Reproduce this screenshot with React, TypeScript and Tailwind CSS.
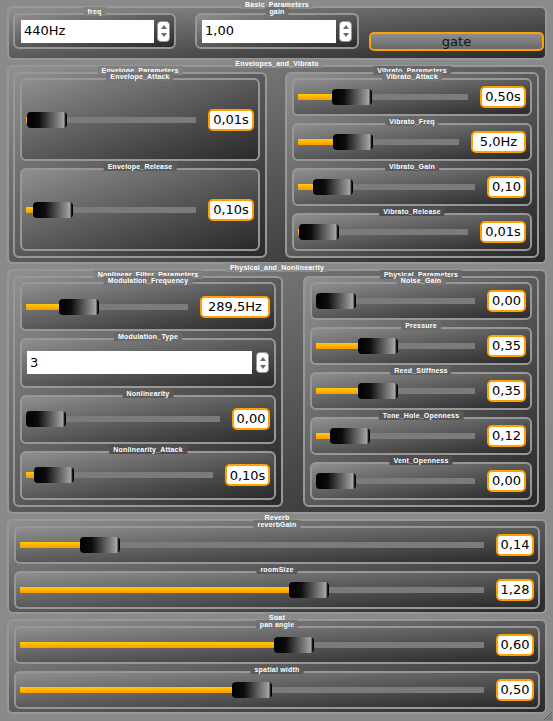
import type { ReactNode } from "react";

type SliderItem = {
  label: string;
  lb: string;
  off: number;
  val: string;
  vw: string;
};

const Label = ({ text, bg }: { text: string; bg: string }) => (
  <span
    className={`absolute left-1/2 top-[-8px] z-10 h-[9px] -translate-x-1/2 whitespace-nowrap px-[4px] font-['Liberation_Sans',Arial,sans-serif] text-[7px] font-bold leading-[9px] tracking-[0.2px] text-white ${bg}`}
  >
    {text}
  </span>
);

const Box = ({
  label,
  lb = "bg-[#8a8a8a]",
  className = "",
  children,
}: {
  label?: string;
  lb?: string;
  className?: string;
  children?: ReactNode;
}) => (
  <div
    className={`relative rounded-[6px] border-2 border-[#979797] bg-linear-to-br from-[#8f8f8f] to-[#2a2a2a] ${className}`}
  >
    {label && <Label text={label} bg={lb} />}
    {children}
  </div>
);

const Slider = ({ item, className = "" }: { item: SliderItem; className?: string }) => (
  <Box
    label={item.label}
    lb={item.lb}
    className={`flex min-h-[38px] items-center gap-[12px] pl-[4px] pr-[4px] ${className}`}
  >
    <div className="relative h-[6px] flex-1 bg-[#7b7b7b]">
      {item.off > 0 && (
        <div
          className="absolute left-0 top-0 h-full bg-linear-to-b from-[#ffcc00] to-[#ff9800]"
          style={{ width: item.off + 2 }}
        />
      )}
      <div
        className="absolute top-1/2 h-[16px] w-[40px] -translate-y-1/2 rounded-[4px] bg-[linear-gradient(90deg,#000_0%,#0d0d0d_30%,#8f8f8f_84%,#a6a6a6_92%,#000_97%)]"
        style={{ left: item.off }}
      />
    </div>
    <div
      className={`flex h-[22px] items-center justify-center rounded-[5px] border-2 border-[#ffa000] bg-white text-[13px] text-black ${item.vw}`}
    >
      {item.val}
    </div>
  </Box>
);

const Stepper = () => (
  <div className="flex h-[21px] w-[13px] flex-col items-center justify-center gap-[4px] rounded-[4px] border border-[#9a9a9a] bg-white">
    <svg width="6" height="4" viewBox="0 0 6 4">
      <path d="M3 0 L6 4 L0 4 Z" fill="#6a6a6a" />
    </svg>
    <svg width="6" height="4" viewBox="0 0 6 4">
      <path d="M0 0 L6 0 L3 4 Z" fill="#6a6a6a" />
    </svg>
  </div>
);

const envelope: SliderItem[] = [
  { label: "Envelope_Attack", lb: "bg-[#747474]", off: 1, val: "0,01s", vw: "w-[46px]" },
  { label: "Envelope_Release", lb: "bg-[#5c5c5c]", off: 7, val: "0,10s", vw: "w-[46px]" },
];

const vibrato: SliderItem[] = [
  { label: "Vibrato_Attack", lb: "bg-[#747474]", off: 34, val: "0,50s", vw: "w-[46px]" },
  { label: "Vibrato_Freq", lb: "bg-[#686868]", off: 35, val: "5,0Hz", vw: "w-[55px]" },
  { label: "Vibrato_Gain", lb: "bg-[#5c5c5c]", off: 15, val: "0,10", vw: "w-[39px]" },
  { label: "Vibrato_Release", lb: "bg-[#505050]", off: 1, val: "0,01s", vw: "w-[46px]" },
];

const physical: SliderItem[] = [
  { label: "Noise_Gain", lb: "bg-[#747474]", off: 0, val: "0,00", vw: "w-[39px]" },
  { label: "Pressure", lb: "bg-[#6b6b6b]", off: 42, val: "0,35", vw: "w-[39px]" },
  { label: "Reed_Stiffness", lb: "bg-[#616161]", off: 42, val: "0,35", vw: "w-[39px]" },
  { label: "Tone_Hole_Openness", lb: "bg-[#575757]", off: 14, val: "0,12", vw: "w-[39px]" },
  { label: "Vent_Openness", lb: "bg-[#4d4d4d]", off: 0, val: "0,00", vw: "w-[39px]" },
];

const reverb: SliderItem[] = [
  { label: "reverbGain", lb: "bg-[#727272]", off: 60, val: "0,14", vw: "w-[38px]" },
  { label: "roomSize", lb: "bg-[#5a5a5a]", off: 269, val: "1,28", vw: "w-[38px]" },
];

const spat: SliderItem[] = [
  { label: "pan angle", lb: "bg-[#727272]", off: 254, val: "0,60", vw: "w-[38px]" },
  { label: "spatial width", lb: "bg-[#5a5a5a]", off: 212, val: "0,50", vw: "w-[38px]" },
];

const App = () => {
  return (
    <div className="relative flex min-h-[721px] w-[553px] flex-col gap-[5px] overflow-hidden bg-[#8a8a8a] pl-[7px] pr-[6px] pt-[6px] font-['DejaVu_Sans',sans-serif]">
      {/* Basic_Parameters */}
      <Box label="Basic_Parameters" className="flex items-start pb-[7px] pl-[4px] pr-[1px] pt-[5px]">
        <Box label="freq" lb="bg-[#808080]" className="flex h-[36px] w-[163px] items-center gap-[3px] pl-[6px]">
          <div className="flex h-[23px] w-[133px] items-center bg-white pl-[3px] text-[13px] text-black">
            440Hz
          </div>
          <Stepper />
        </Box>
        <Box label="gain" lb="bg-[#707070]" className="ml-[19px] flex h-[36px] w-[164px] items-center gap-[3px] pl-[5px]">
          <div className="flex h-[23px] w-[134px] items-center bg-white pl-[3px] text-[13px] text-black">
            1,00
          </div>
          <Stepper />
        </Box>
        <div className="ml-[10px] mt-[19px] flex h-[19px] w-[175px] items-center justify-center rounded-[5px] border-2 border-[#ffa000] bg-linear-to-b from-[#8e8e8e] to-[#686868] text-[13px] text-[#151515]">
          gate
        </div>
      </Box>

      {/* Envelopes_and_Vibrato */}
      <Box label="Envelopes_and_Vibrato" className="flex justify-between pb-[4px] pl-[4px] pr-[6px] pt-[5px]">
        <Box label="Envelope_Parameters" lb="bg-[#818181]" className="flex w-[254px] flex-col gap-[7px] px-[5px] pb-[5px] pt-[4px]">
          {envelope.map((s) => (
            <Slider key={s.label} item={s} className="flex-1" />
          ))}
        </Box>
        <Box label="Vibrato_Parameters" lb="bg-[#686868]" className="flex w-[254px] flex-col gap-[7px] px-[5px] pb-[5px] pt-[4px]">
          {vibrato.map((s) => (
            <Slider key={s.label} item={s} className="flex-1" />
          ))}
        </Box>
      </Box>

      {/* Physical_and_Nonlinearity */}
      <Box label="Physical_and_Nonlinearity" className="flex justify-between pb-[5px] pl-[4px] pr-[6px] pt-[5px]">
        <Box label="Nonlinear_Filter_Parameters" lb="bg-[#808080]" className="flex w-[270px] flex-col gap-[7px] px-[5px] pb-[5px] pt-[4px]">
          <Slider
            item={{ label: "Modulation_Frequency", lb: "bg-[#747474]", off: 33, val: "289,5Hz", vw: "w-[70px]" }}
            className="flex-1"
          />
          <Box label="Modulation_Type" lb="bg-[#686868]" className="flex flex-1 items-center gap-[4px] px-[5px]">
            <div className="flex h-[23px] flex-1 items-center bg-white pl-[3px] text-[13px] text-black">3</div>
            <Stepper />
          </Box>
          <Slider
            item={{ label: "Nonlinearity", lb: "bg-[#5c5c5c]", off: 0, val: "0,00", vw: "w-[38px]" }}
            className="flex-1"
          />
          <Slider
            item={{ label: "Nonlinearity_Attack", lb: "bg-[#505050]", off: 8, val: "0,10s", vw: "w-[45px]" }}
            className="flex-1"
          />
        </Box>
        <Box label="Physical_Parameters" lb="bg-[#676767]" className="flex w-[236px] flex-col gap-[7px] px-[5px] pb-[5px] pt-[4px]">
          {physical.map((s) => (
            <Slider key={s.label} item={s} className="flex-1" />
          ))}
        </Box>
      </Box>

      {/* Reverb */}
      <Box label="Reverb" className="flex flex-col gap-[7px] pb-[3px] pl-[5px] pr-[5px] pt-[5px]">
        {reverb.map((s) => (
          <Slider key={s.label} item={s} />
        ))}
      </Box>

      {/* Spat */}
      <Box label="Spat" className="flex flex-col gap-[7px] pb-[3px] pl-[5px] pr-[5px] pt-[5px]">
        {spat.map((s) => (
          <Slider key={s.label} item={s} />
        ))}
      </Box>

      {/* window resize grip */}
      <svg className="absolute bottom-[1px] right-[1px]" width="10" height="10" viewBox="0 0 10 10">
        <path d="M2 10 L10 2 M5 10 L10 5 M8 10 L10 8" stroke="#5a5a5a" strokeWidth="1" />
      </svg>
    </div>
  );
};

export default App;
